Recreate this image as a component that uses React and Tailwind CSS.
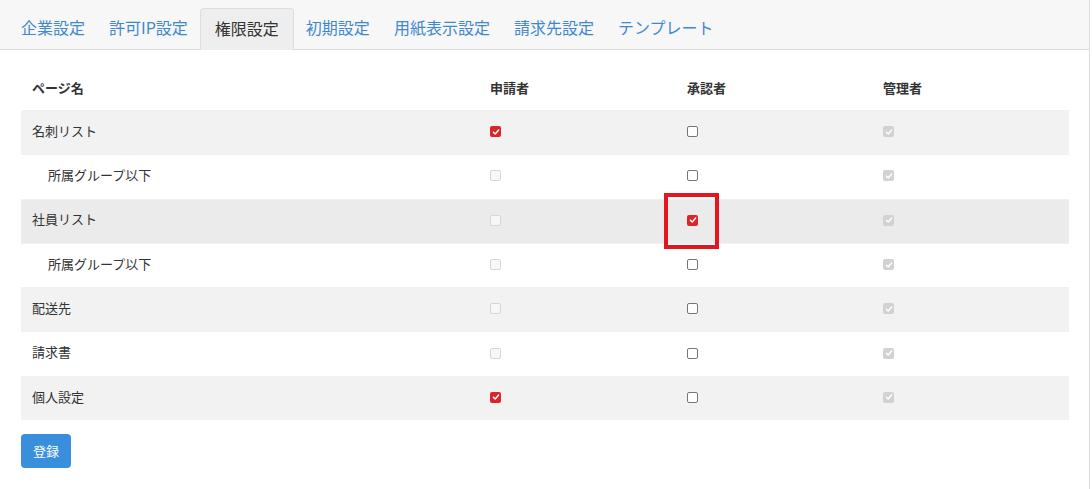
import React from 'react';

const tabs = ['企業設定', '許可IP設定', '権限設定', '初期設定', '用紙表示設定', '請求先設定', 'テンプレート'];

// state: on / off / dis (disabled empty) / lock (disabled checked)
const rows = [
  { name: '名刺リスト', cells: ['on', 'off', 'lock'] },
  { name: '所属グループ以下', sub: true, cells: ['dis', 'off', 'lock'] },
  { name: '社員リスト', cells: ['dis', 'on', 'lock'], hover: true, mark: true },
  { name: '所属グループ以下', sub: true, cells: ['dis', 'off', 'lock'] },
  { name: '配送先', cells: ['dis', 'off', 'lock'] },
  { name: '請求書', cells: ['dis', 'off', 'lock'] },
  { name: '個人設定', cells: ['on', 'off', 'lock'] },
];

const Check = ({ state }) => {
  if (state === 'on' || state === 'lock') {
    return (
      <span
        className={
          'flex h-[11px] w-[11px] items-center justify-center rounded-[2px] ' +
          (state === 'on' ? 'bg-[#d9262b]' : 'bg-[#d2d2d2]')
        }
      >
        <svg viewBox="0 0 10 10" className="h-[8px] w-[8px]">
          <path d="M1.8 5.2 L4 7.4 L8.3 2.4" fill="none" stroke="#fff" strokeWidth="1.8" strokeLinecap="round" strokeLinejoin="round" />
        </svg>
      </span>
    );
  }
  return (
    <span
      className={
        'block h-[11px] w-[11px] rounded-[2px] border ' +
        (state === 'off' ? 'border-[#767676] bg-white' : 'border-[#d6d6d6] bg-[#f7f7f7]')
      }
    />
  );
};

export default function App() {
  return (
    <div className="h-[489px] w-[1092px] bg-white text-[13px] text-[#333]" style={{ fontFamily: '"Noto Sans CJK JP", "Noto Sans", sans-serif' }}>
      <div className="h-full w-[1090px] border-r border-[#dcdcdc]">
        {/* tabs */}
        <div className="flex h-[50px] items-end border-b border-[#dddddd] bg-[#f7f7f7] pl-[9px]">
          {tabs.map((t, i) =>
            i === 2 ? (
              <div key={t} className="mb-[-1px] flex h-[42px] items-center rounded-t-[4px] border border-b-0 border-[#dddddd] bg-[#eeeeee] px-[14px] pb-[3px] text-[16px] text-[#333]">
                {t}
              </div>
            ) : (
              <div key={t} className="flex h-[41px] items-center px-[12px] pb-[3px] text-[16px] text-[#3f88cf]">
                {t}
              </div>
            )
          )}
        </div>

        <div className="pl-[21px] pr-[20px] pt-[16px]">
          <div className="grid h-[44px] grid-cols-[458px_197px_196px_197px] items-center pb-[1px] font-bold">
            <div className="px-[11px]">ページ名</div>
            <div className="px-[11px]">申請者</div>
            <div className="px-[11px]">承認者</div>
            <div className="px-[11px]">管理者</div>
          </div>
          {rows.map((r, i) => (
            <div
              key={i}
              className={
                'grid h-[44.3px] grid-cols-[458px_197px_196px_197px] items-center border-t border-[#f0f0f0] pb-[2px] ' +
                (r.hover ? 'bg-[#ebebeb]' : i % 2 === 0 ? 'bg-[#f2f2f2]' : 'bg-white')
              }
            >
              <div className={(r.sub ? 'pl-[27px]' : 'px-[11px]') + ' pb-[2px]'}>{r.name}</div>
              {r.cells.map((c, j) => (
                <div key={j} className="relative flex pl-[11px]">
                  <Check state={c} />
                  {r.mark && j === 1 && (
                    <span className="absolute left-[-12px] top-[-22px] h-[56px] w-[55px] border-[4px] border-[#e3161f]" />
                  )}
                </div>
              ))}
            </div>
          ))}
          <button className="mt-[14px] h-[34px] rounded-[4px] bg-[#3a8fdc] px-[12px] text-[13px] text-white">登録</button>
        </div>
      </div>
    </div>
  );
}
